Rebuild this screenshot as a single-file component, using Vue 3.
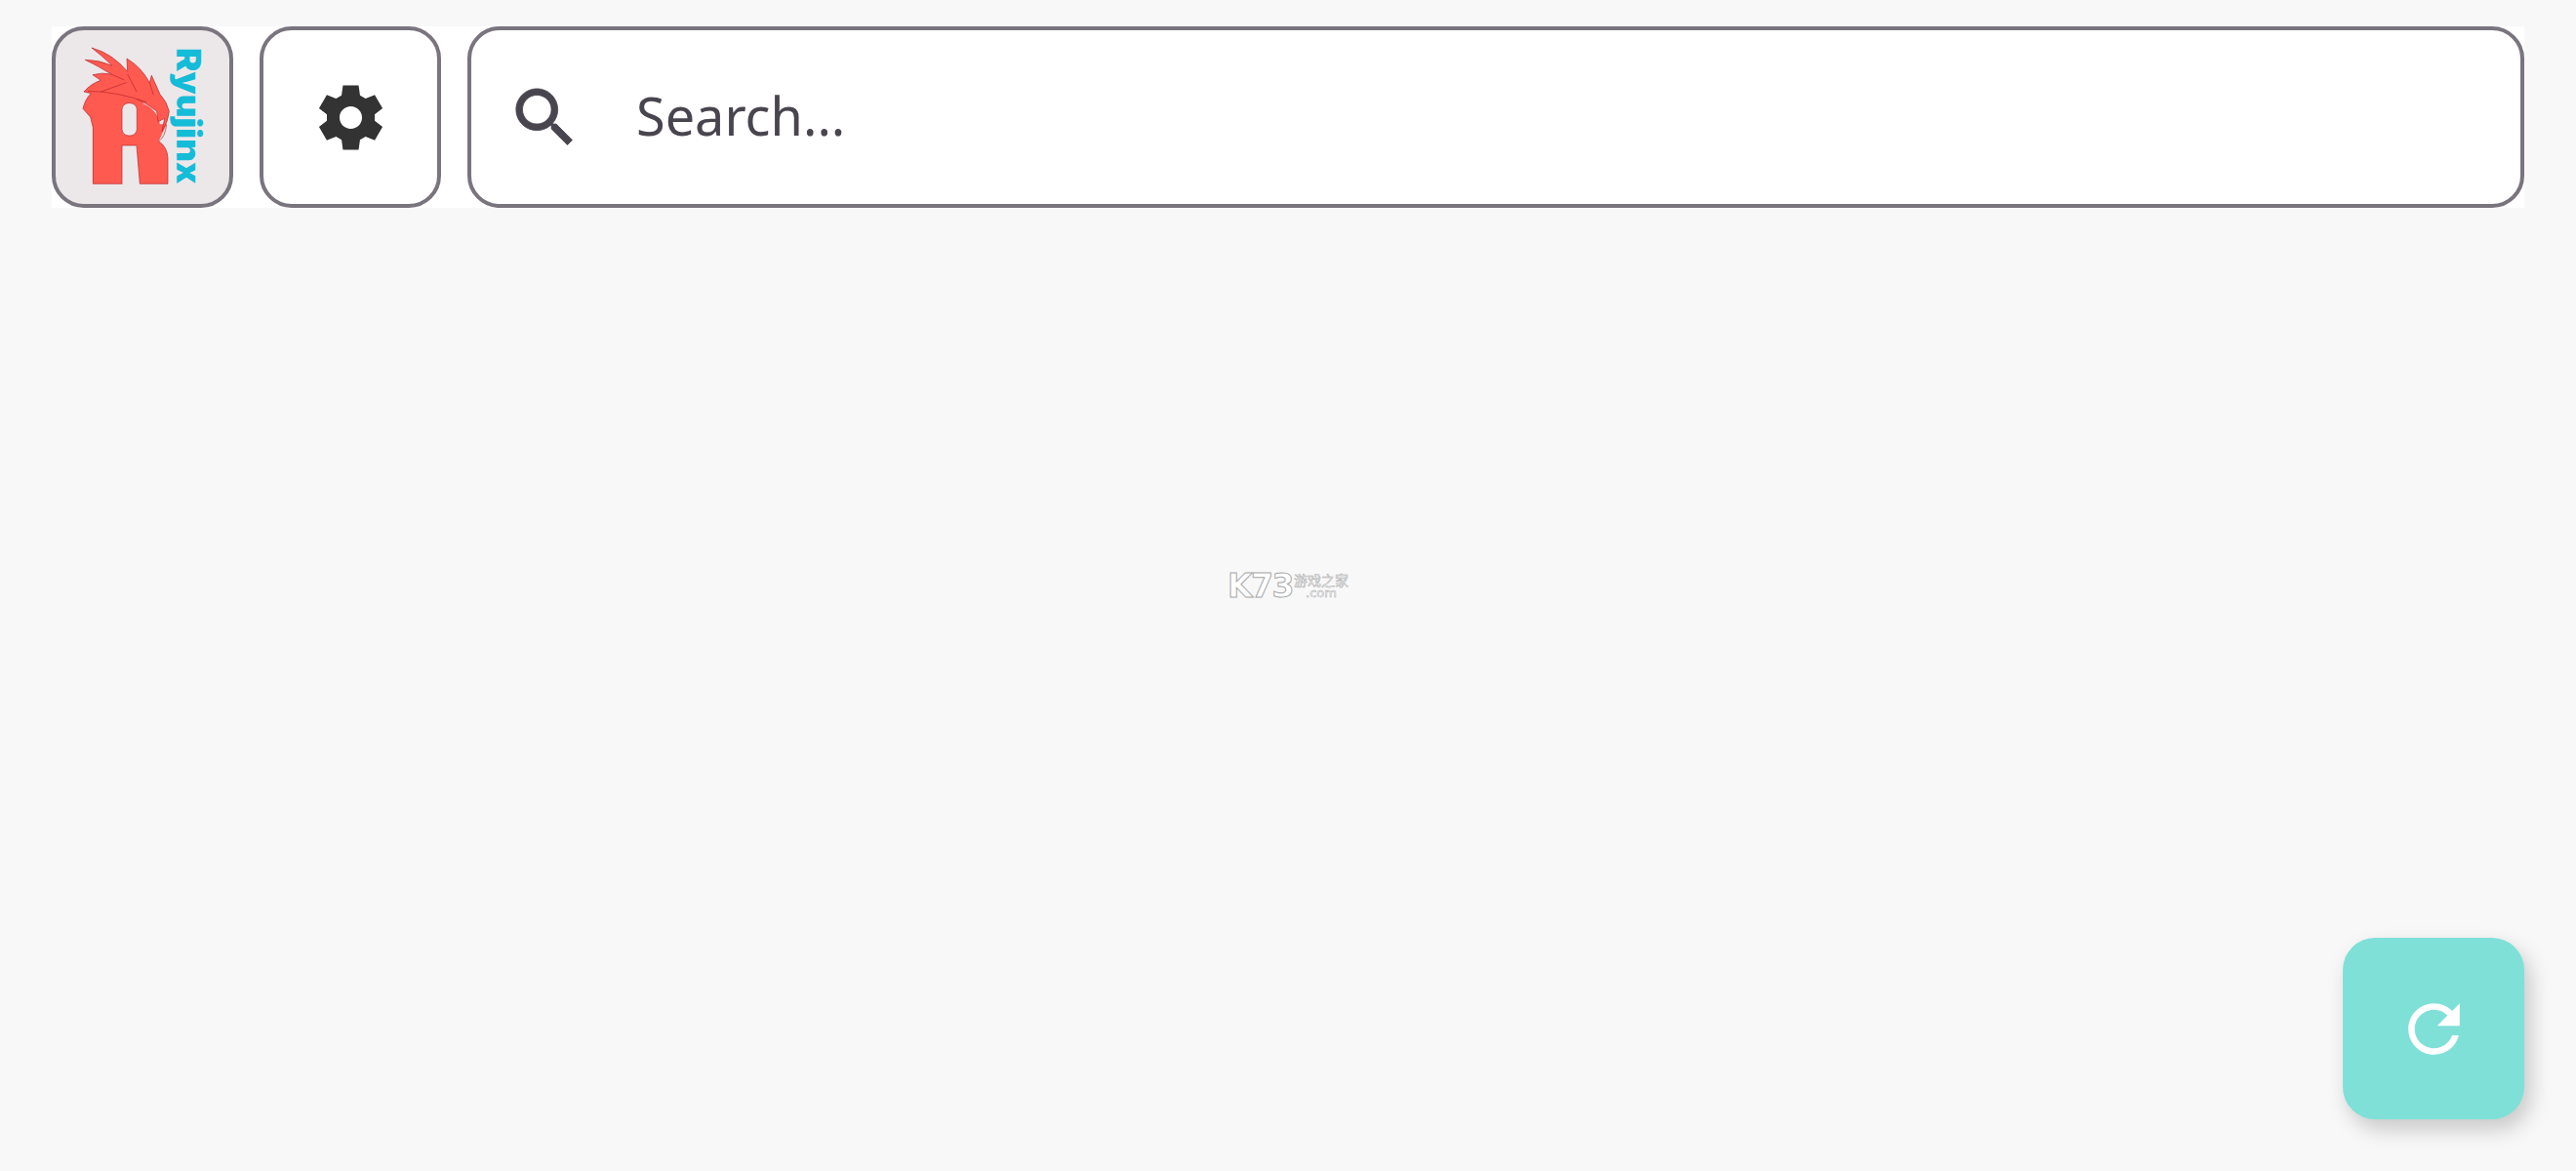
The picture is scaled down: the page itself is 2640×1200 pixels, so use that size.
<template>
  <div class="page">
    <div class="toolbar">
      <button class="box logo">
        <svg class="logo-art" viewBox="51 51 534 534">
          <text class="r-letter" x="150" y="523" textLength="236" lengthAdjust="spacingAndGlyphs">R</text>
          <path class="r-leg" d="M166 340 L260 340 L260 523 L166 523 Z M250 375 L368 340 L392 340 L368 392 Q395 410 396 445 L396 523 L310 523 L300 405 L250 405 Z" />
          <path class="r-gap" d="M255 405 L300 405 L310 523 L255 523 Z" />
          <path
            class="dragon"
            d="M166 350 L158 318 L135 292 Q142 262 160 245 L138 240 Q160 215 190 205 L165 188 Q195 180 222 186 Q180 160 142 142 Q185 142 225 160 Q195 130 162 105 Q225 122 272 178 L270 138 Q315 165 340 212 L346 190 Q362 225 372 248 Q392 268 400 300 Q398 330 378 362 L386 322 L366 332 L362 300 Q335 278 300 262 L320 270 L320 390 L262 390 L262 360 Z"
          />
          <path
            class="dragon-line"
            d="M166 350 L158 318 L135 292 Q142 262 160 245 L138 240 Q160 215 190 205 L165 188 Q195 180 222 186 Q180 160 142 142 Q185 142 225 160 Q195 130 162 105 Q225 122 272 178 L270 138 Q315 165 340 212 L346 190 Q362 225 372 248 Q392 268 400 300 Q398 330 378 362 L386 322 L366 332 L362 300 Q335 278 300 262 M190 240 L268 212 M150 238 Q245 240 330 272 M272 186 L300 240 M222 186 L262 204 M340 212 L352 250 M166 350 L166 523 L255 523 L255 405 L300 405 L310 523 L396 523 L396 445 Q395 410 368 392 Q388 380 392 340"
          />
          <rect class="r-counter" x="255" y="275" width="46" height="100" rx="20" />
          <text class="ryujinx" x="424" y="105" transform="rotate(90 424 105)" textLength="418" lengthAdjust="spacingAndGlyphs">Ryujinx</text>
        </svg>
      </button>
      <button class="box settings">
        <svg class="icon gear" viewBox="0 0 24 24">
          <path fill-rule="evenodd" d="M14.44 2 L14.88 5.07 L16.59 6.06 L19.46 4.9 L21.89 9.12 L19.45 11.04 L19.45 12.99 L21.89 14.91 L19.46 19.1 L16.59 17.93 L14.88 18.93 L14.44 22 H9.56 L9.12 18.93 L7.41 17.93 L4.54 19.1 L2.11 14.91 L4.55 12.99 L4.55 11.04 L2.11 9.12 L4.54 4.9 L7.41 6.06 L9.12 5.07 L9.56 2 Z M12 15.5c-1.93 0-3.5-1.57-3.5-3.5s1.57-3.5 3.5-3.5 3.5 1.57 3.5 3.5-1.57 3.5-3.5 3.5z" />
        </svg>
      </button>
      <div class="box search">
        <svg class="icon lens" viewBox="0 0 24 24">
          <path d="M15.5 14h-.79l-.28-.27C15.41 12.59 16 11.11 16 9.5 16 5.91 13.09 3 9.5 3S3 5.91 3 9.5 5.91 16 9.5 16c1.61 0 3.09-.59 4.23-1.57l.27.28v.79l5 4.99L20.49 19l-4.99-5zm-6 0C7.01 14 5 11.99 5 9.5S7.01 5 9.5 5 14 7.01 14 9.5 11.99 14 9.5 14z" />
        </svg>
        <span class="placeholder">Search...</span>
      </div>
    </div>

    <div class="watermark">
      <span class="wm-big">K73</span>
      <span class="wm-side">
        <span class="wm-cn">游戏之家</span>
        <span class="wm-com">.com</span>
      </span>
    </div>

    <button class="fab">
      <svg class="icon" viewBox="0 0 24 24">
        <path d="M17.65 6.35C16.2 4.9 14.21 4 12 4c-4.42 0-7.99 3.58-7.99 8s3.57 8 7.99 8c3.73 0 6.84-2.55 7.73-6h-2.08c-.82 2.33-3.04 4-5.65 4-3.31 0-6-2.69-6-6s2.69-6 6-6c1.66 0 3.14.69 4.22 1.78L13 11h7V4l-2.35 2.35z" />
      </svg>
    </button>
  </div>
</template>

<script setup>
</script>

<style>
html,
body {
  margin: 0;
  background: #f8f8f8;
}
</style>

<style scoped>
.page {
  position: relative;
  height: 1200px;
  box-sizing: border-box;
  padding: 27px 53px;
  background: #f8f8f8;
  font-family: "Noto Sans", sans-serif;
  overflow: hidden;
}

.toolbar {
  display: flex;
  gap: 27px;
  height: 186px;
  background: #fff;
}

.box {
  box-sizing: border-box;
  height: 186px;
  padding: 0;
  border: 4px solid #79747e;
  border-radius: 33px;
  background: #fff;
  display: flex;
  align-items: center;
}

.logo {
  width: 186px;
  flex: none;
  background: #ece8e9;
}

.logo-art {
  display: block;
  width: 178px;
  height: 178px;
  overflow: visible;
}

.dragon,
.r-leg {
  fill: #fe5a50;
}

.r-gap {
  fill: #ece8e9;
}

.dragon-line {
  fill: none;
  stroke: #b5242a;
  stroke-width: 2;
}

.r-letter {
  font-family: Inter, sans-serif;
  font-weight: 900;
  font-size: 345px;
  fill: #fe5a50;
}

.r-counter {
  fill: #ece8e9;
  stroke: #b5242a;
  stroke-width: 2;
}

.ryujinx {
  font-family: Inter, sans-serif;
  font-weight: 900;
  font-size: 101px;
  fill: #14bcd8;
}

.settings {
  width: 186px;
  flex: none;
  justify-content: center;
}

.icon {
  display: block;
  width: 79px;
  height: 79px;
  flex: none;
}

.gear path {
  fill: #333;
}

.search {
  flex: 1;
  padding-left: 36px;
  gap: 54px;
}

.lens path {
  fill: #49454f;
  stroke: #49454f;
  stroke-width: 0.25;
}

.placeholder {
  font-size: 54px;
  padding-bottom: 4px;
  color: #49454f;
}

.watermark {
  position: absolute;
  left: 1258px;
  top: 584px;
  display: flex;
  gap: 1px;
  align-items: center;
  font-family: "DejaVu Sans", sans-serif;
  color: #fff;
  -webkit-text-stroke: 1px #a8a8a8;
}

.wm-big {
  font-size: 33px;
  font-weight: 700;
  line-height: 33px;
  letter-spacing: -1.5px;
}

.wm-side {
  display: flex;
  flex-direction: column;
  align-items: center;
  line-height: 14px;
}

.wm-cn {
  font-family: "Noto Sans CJK SC", sans-serif;
  font-size: 14px;
  -webkit-text-stroke: 0.5px #a8a8a8;
}

.wm-com {
  font-size: 13px;
  -webkit-text-stroke: 0.5px #a8a8a8;
}

.fab {
  position: absolute;
  right: 53px;
  bottom: 53px;
  width: 186px;
  height: 186px;
  padding: 0;
  border: none;
  border-radius: 33px;
  background: #7fe0d8;
  box-shadow: 6px 10px 22px rgba(0, 0, 0, 0.2);
  display: flex;
  align-items: center;
  justify-content: center;
}

.fab path {
  fill: #fff;
}
</style>
